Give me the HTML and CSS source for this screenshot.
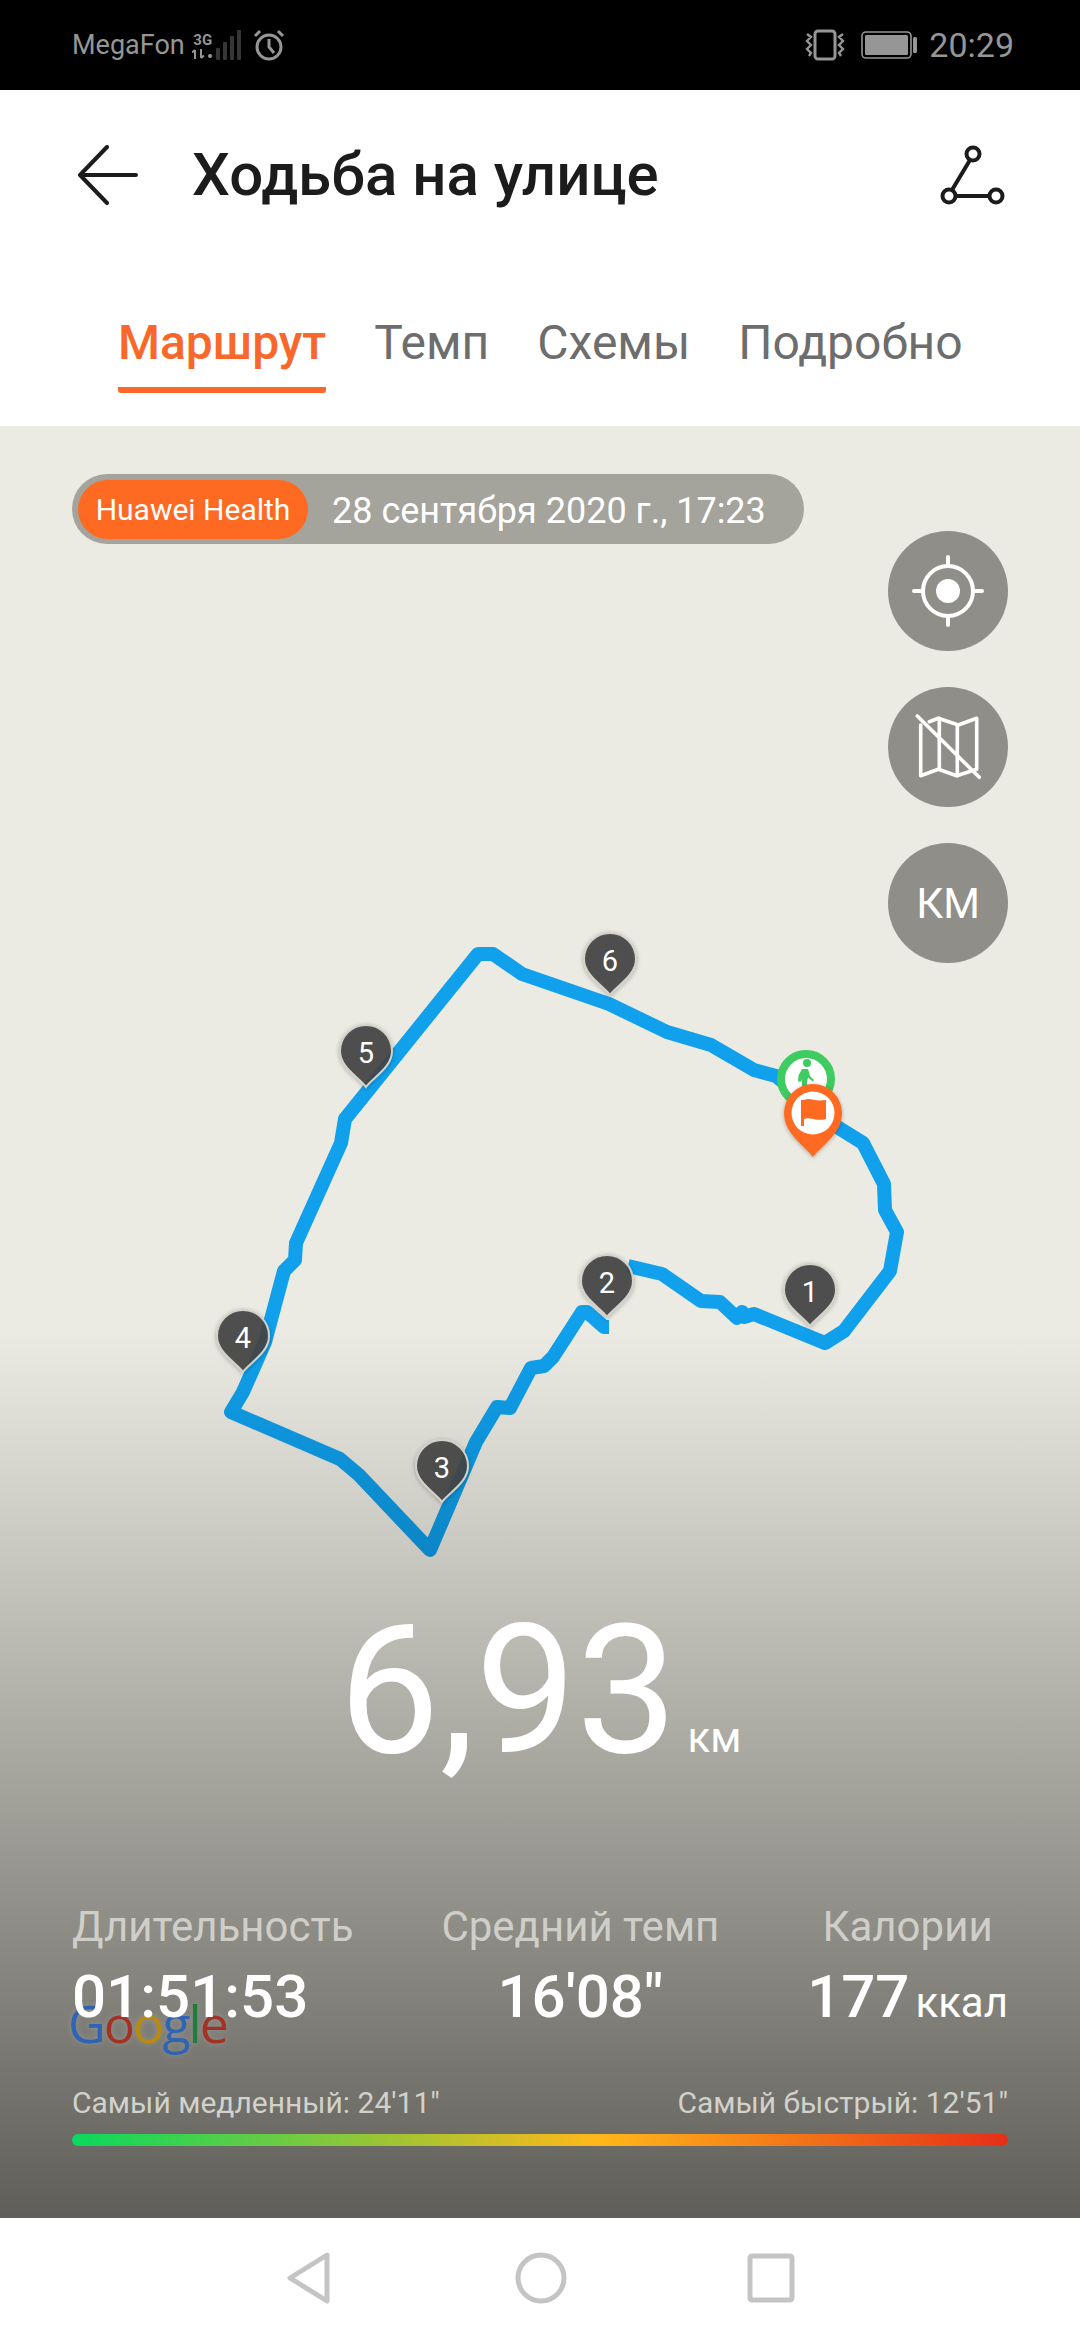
FILE: index.html
```html
<!DOCTYPE html>
<html lang="ru">
<head>
<meta charset="utf-8">
<title>Ходьба на улице</title>
<link rel="stylesheet" href="styles.css">
</head>
<body>
<div class="screen">
  <div class="status">
    <div class="status-side">
      <span class="carrier">MegaFon</span>
      <div class="net">
        <span class="net-type">3G</span>
        <svg class="net-arrows" width="22" height="10" viewBox="0 0 22 10"><path d="M3 1v9M0 3.5 3 1M9 0v9M9 9l3-2.5" fill="none" stroke="#969696" stroke-width="2"/><circle cx="18" cy="7" r="2" fill="#969696"/></svg>
      </div>
      <svg class="signal" width="26" height="32" viewBox="0 0 26 32"><g fill="#363636"><rect x="0" y="19" width="4" height="12" rx="1"/><rect x="7" y="13" width="4" height="18" rx="1"/><rect x="14" y="7" width="4" height="24" rx="1"/><rect x="21" y="1" width="4" height="30" rx="1"/></g></svg>
      <svg class="alarm" width="32" height="32" viewBox="0 0 32 32"><g fill="none" stroke="#969696" stroke-width="3"><circle cx="16" cy="18" r="12"/><path d="M16 10v8l5 6M2 7l5-5M30 7l-5-5"/></g></svg>
    </div>
    <div class="status-side">
      <svg class="vibrate" width="42" height="32" viewBox="0 0 42 32"><g fill="none" stroke="#969696"><rect x="11" y="2" width="20" height="28" rx="3" stroke-width="3"/><path d="M3 5l4 3-4 4 4 4-4 4 4 4-2 3M39 5l-4 3 4 4-4 4 4 4-4 4 2 3" stroke-width="2.4"/></g></svg>
      <svg class="battery" width="57" height="28" viewBox="0 0 57 28"><rect x="1" y="1" width="49" height="26" rx="4" fill="none" stroke="#969696" stroke-width="1.6"/><rect x="4" y="4" width="43" height="20" rx="1.5" fill="#969696"/><rect x="52" y="6" width="4" height="16" rx="1.5" fill="#969696"/></svg>
      <span class="clock">20:29</span>
    </div>
  </div>

  <header class="appbar">
    <svg class="appbar-icon" width="60" height="60" viewBox="0 0 60 60"><path d="M29 2 2 30l27 28M2 30h56" fill="none" stroke="#1c1c1c" stroke-width="4" stroke-linecap="round" stroke-linejoin="round"/></svg>
    <h1 class="title">Ходьба на улице</h1>
    <svg class="appbar-icon" width="66" height="60" viewBox="0 0 66 60"><g fill="none" stroke="#1c1c1c" stroke-width="4"><circle cx="33" cy="9" r="6.5"/><circle cx="9" cy="51" r="6.5"/><circle cx="56" cy="51" r="6.5"/><path d="M30 15 12 45M16 51h33"/></g></svg>
  </header>

  <nav class="tabs">
    <span class="tab tab-active">Маршрут</span>
    <span class="tab">Темп</span>
    <span class="tab">Схемы</span>
    <span class="tab">Подробно</span>
  </nav>

  <main class="map">
    <svg class="route" viewBox="0 426 1080 1792" width="1080" height="1792">
      <defs>
        <filter id="pinShadow" x="-30%" y="-30%" width="160%" height="160%"><feDropShadow dx="0" dy="1" stdDeviation="2" flood-color="#000" flood-opacity=".3"/></filter>
        <linearGradient id="trackShade" gradientUnits="userSpaceOnUse" x1="0" y1="1330" x2="0" y2="1552"><stop offset="0" stop-color="#10a0ec"/><stop offset="1" stop-color="#0c86c6"/></linearGradient>
        <g id="pin"><path d="M0 0C-6-9-26-19-26-36A26 26 0 1 1 26-36C26-19 6-9 0 0Z" fill="#444" fill-opacity=".9" stroke="#d2d1ca" stroke-width="2" filter="url(#pinShadow)"/></g>
      </defs>
      <polyline class="track" points="628,1266 662,1274 701,1301 720,1302 737,1318 742,1312 744,1317 754,1314 825,1343 844,1331 890,1271 897,1232 885,1210 884,1184 863,1143 834,1125 776,1076 754,1070 711,1045 667,1032 609,1004 522,974 493,954 478,954 345,1119 341,1143 296,1243 295,1260 284,1271 265,1342 243,1392 231,1412 340,1459 359,1475 430,1550 476,1442 497,1407 510,1408 531,1368 544,1366 553,1357 582,1312 587,1312 604,1327 609,1327"/>
      <g transform="translate(810 1326)"><use href="#pin"/><text class="pin-num" y="-24">1</text></g>
      <g transform="translate(607 1317)"><use href="#pin"/><text class="pin-num" y="-24">2</text></g>
      <g transform="translate(442 1502)"><use href="#pin"/><text class="pin-num" y="-24">3</text></g>
      <g transform="translate(243 1372)"><use href="#pin"/><text class="pin-num" y="-24">4</text></g>
      <g transform="translate(366 1087)"><use href="#pin"/><text class="pin-num" y="-24">5</text></g>
      <g transform="translate(610 995)"><use href="#pin"/><text class="pin-num" y="-24">6</text></g>
      <circle cx="806" cy="1079" r="25" fill="#fff" stroke="#3ecb60" stroke-width="8"/>
      <g fill="#3ecb60"><circle cx="807" cy="1063" r="4"/><path d="M802 1069h6l2 7 4 4-1.500 1.500-4.500-4-1 5v6h-5v-9l-1 2h-3l.5-6z"/></g>
      <path d="M813 1157C805 1146 784 1134 784 1113A29 29 0 1 1 842 1113C842 1134 821 1146 813 1157Z" fill="#ff6a22" filter="url(#pinShadow)"/>
      <circle cx="813" cy="1113" r="21.500" fill="#fff"/>
      <path d="M801 1100h3c6-3 10 2 22 0v19c-10 3-16-3-22 0v7h-3z" fill="#ff6a22"/>
    </svg>

    <div class="map-top">
      <div class="pill">
        <span class="pill-brand">Huawei Health</span>
        <span class="pill-date">28 сентября 2020 г., 17:23</span>
      </div>
      <div class="fabs">
        <div class="fab">
          <svg width="72" height="72" viewBox="0 0 72 72"><g fill="none" stroke="#fff" stroke-width="4"><circle cx="36" cy="36" r="25"/><path d="M36 2v9M36 61v9M2 36h9M61 36h9" stroke-linecap="round"/></g><circle cx="36" cy="36" r="12" fill="#fff"/></svg>
        </div>
        <div class="fab">
          <svg width="72" height="72" viewBox="0 0 72 72"><g fill="none" stroke="#fff" stroke-width="3.600" stroke-linejoin="round" stroke-linecap="round"><path d="M17.300 10.700 26.300 7.300 46.300 14 64.700 7.300V58.300L44.700 64.700 26.300 58.300 8.700 64.700V14"/><path d="M27.300 7.300V58.300M45.300 14V64.700"/><path d="M5.300 5 67.300 66.300"/></g></svg>
        </div>
        <div class="fab fab-text">КМ</div>
      </div>
    </div>

    <div class="map-bottom">
      <div class="distance"><span class="distance-value">6,93</span><span class="distance-unit">км</span></div>
      <div class="stats">
        <div class="stat stat-first">
          <span class="stat-label">Длительность</span>
          <span class="stat-value">01:51:53</span>
          <span class="google"><span class="g-blue">G</span><span class="g-red">o</span><span class="g-yellow">o</span><span class="g-blue">g</span><span class="g-green">l</span><span class="g-red">e</span></span>
        </div>
        <div class="stat">
          <span class="stat-label">Средний темп</span>
          <span class="stat-value">16'08"</span>
        </div>
        <div class="stat">
          <span class="stat-label">Калории</span>
          <span class="stat-value">177<small class="stat-unit">ккал</small></span>
        </div>
      </div>
      <div class="pace-labels">
        <span>Самый медленный: 24'11"</span>
        <span>Самый быстрый: 12'51"</span>
      </div>
      <div class="pace-bar"></div>
    </div>
  </main>

  <footer class="navbar">
    <svg width="46" height="54" viewBox="0 0 46 54"><path d="M41 4 4 27l37 23z" fill="none" stroke="#c4c4c4" stroke-width="5" stroke-linejoin="round"/></svg>
    <svg width="54" height="54" viewBox="0 0 54 54"><circle cx="27" cy="27" r="23" fill="none" stroke="#c4c4c4" stroke-width="5"/></svg>
    <svg width="48" height="50" viewBox="0 0 48 50"><rect x="3" y="3" width="42" height="44" rx="2" fill="none" stroke="#c4c4c4" stroke-width="5"/></svg>
  </footer>
</div>
</body>
</html>
```
FILE: styles.css
```css
* { box-sizing: border-box; }
html, body { margin: 0; padding: 0; }
body { font-family: Roboto, "Noto Sans", sans-serif; background: #fff; }
.screen { width: 1080px; height: 2340px; display: flex; flex-direction: column; overflow: hidden; }

.status { height: 90px; flex: none; background: #000; display: flex; justify-content: space-between; align-items: center; padding: 0 66px 0 72px; color: #969696; }
.status-side { display: flex; align-items: center; }
.carrier { font-size: 27px; line-height: 34px; }
.net { display: flex; flex-direction: column; align-items: center; width: 24px; margin-left: 6px; line-height: 1; }
.net-type { font-size: 15px; font-weight: 700; line-height: 18px; }
.signal { margin-left: 1px; }
.alarm { margin-left: 11px; }
.vibrate { margin-right: 15px; }
.battery { margin-right: 11px; }
.clock { font-size: 34px; line-height: 40px; }

.appbar { height: 175px; flex: none; display: flex; align-items: center; padding: 0 74px 6px 78px; }
.title { flex: 1; margin: 0 0 0 54px; font-size: 60px; font-weight: 500; color: #1c1c1c; }

.tabs { height: 161px; flex: none; display: flex; gap: 48px; padding: 0 0 0 118px; align-items: flex-start; }
.tab { font-size: 48px; line-height: 80px; height: 90px; margin-top: 38px; color: #6d6d6d; border-bottom: 6px solid transparent; border-radius: 3px; }
.tab-active { color: #f9682a; font-weight: 500; border-bottom-color: #f9682a; }

.map { flex: 1; position: relative; display: flex; flex-direction: column; justify-content: space-between; background: linear-gradient(#ecebe3 0, #ecebe3 904px, #5f5e58 1792px); }
.route { position: absolute; left: 0; top: 0; }
.track { fill: none; stroke: url(#trackShade); stroke-width: 14; stroke-linejoin: round; stroke-linecap: butt; }
.pin-num { fill: #fff; font-family: Roboto, sans-serif; font-size: 29px; text-anchor: middle; }

.map-top { position: relative; display: flex; flex-direction: column; align-items: flex-start; padding: 48px 72px 0; }
.pill { width: 732px; height: 70px; background: #a4a39c; border-radius: 35px; display: flex; align-items: center; padding: 0 6px; }
.pill-brand { width: 230px; height: 59px; background: #ff6a22; border-radius: 30px; color: #fff; font-size: 30px; line-height: 59px; text-align: center; }
.pill-date { margin: 4px 0 0 24px; color: #fff; font-size: 36px; }
.fabs { align-self: flex-end; display: flex; flex-direction: column; gap: 36px; margin-top: -13px; }
.fab { width: 120px; height: 120px; border-radius: 50%; background: #8f8e88; display: flex; align-items: center; justify-content: center; }
.fab-text { color: #fff; font-size: 42px; }

.map-bottom { position: relative; padding: 0 72px 72px; color: #fff; }
.distance { display: flex; align-items: baseline; justify-content: center; }
.distance-value { font-size: 180px; line-height: 206px; font-weight: 400; }
.distance-unit { font-size: 42px; margin-left: 10px; }
.stats { display: flex; justify-content: space-between; margin-top: 110px; }
.stat { position: relative; display: flex; flex-direction: column; align-items: center; }
.stat-first { align-items: flex-start; }
.stat-label { font-size: 42px; line-height: 46px; color: #cfcec9; }
.stat-value { position: relative; font-size: 60px; line-height: 68px; font-weight: 500; margin-top: 13px; z-index: 1; }
.stat-unit { font-size: 42px; font-weight: 400; margin-left: 6px; }
.google { position: absolute; left: -4px; top: 84px; font-family: "Open Sans", sans-serif; font-weight: 500; font-size: 52px; line-height: 70px; letter-spacing: -2px; text-shadow: 0 0 6px rgba(255,255,255,.2); }
.g-blue { color: #2f64b4; }
.g-red { color: #a33226; }
.g-yellow { color: #b88a10; }
.g-green { color: #1f7d3c; }
.pace-labels { display: flex; justify-content: space-between; margin-top: 48px; font-size: 30px; line-height: 36px; color: #d2d1cc; }
.pace-bar { height: 12px; margin-top: 13px; border-radius: 6px; background: linear-gradient(90deg, #0ad85e 0, #ffb81a 56%, #e52f18 100%); }

.navbar { height: 122px; flex: none; background: #fff; display: flex; align-items: center; padding-bottom: 2px; }
.navbar svg:nth-child(1) { margin-left: 286px; }
.navbar svg:nth-child(2) { margin-left: 182px; }
.navbar svg:nth-child(3) { margin-left: 179px; }
```
